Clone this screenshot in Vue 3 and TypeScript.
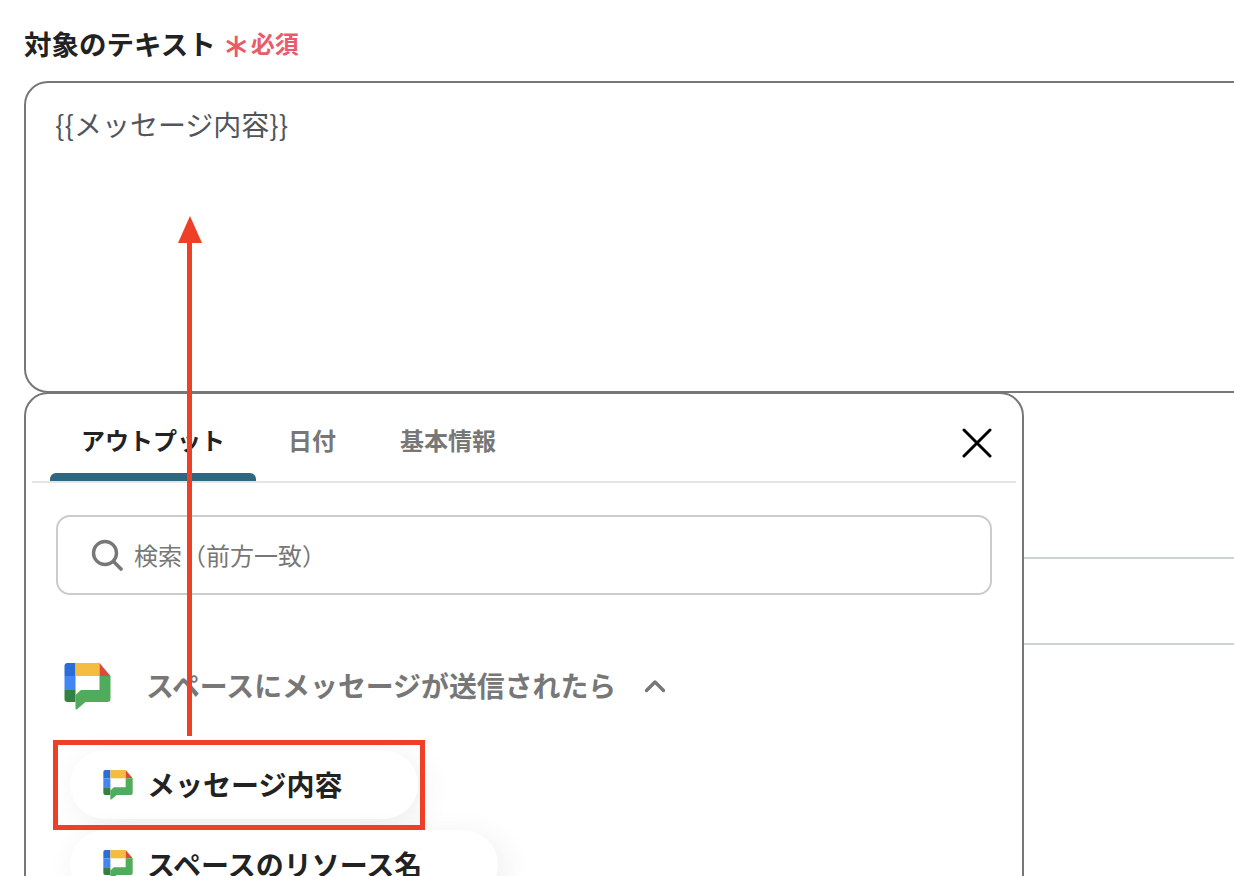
<script setup lang="ts">
const tabs = [
  { label: 'アウトプット', active: true },
  { label: '日付', active: false },
  { label: '基本情報', active: false },
]
const items = ['メッセージ内容', 'スペースのリソース名']
const fieldValue = '{' + '{メッセージ内容}' + '}'
</script>

<template>
  <div class="page">
    <svg class="defs" width="0" height="0" aria-hidden="true">
      <symbol id="chat" viewBox="0 0 46 47">
        <path d="M3 0H11V13H0V3A3 3 0 0 1 3 0Z" fill="#2a6dd9" />
        <rect x="0" y="13" width="11" height="14" fill="#4285f4" />
        <path d="M0 27H11V39H3A3 3 0 0 1 0 36Z" fill="#34813f" />
        <rect x="11" y="0" width="24" height="13" fill="#f4bc41" />
        <path d="M35 0L46 13H35Z" fill="#db4a3d" />
        <path d="M35 13H46V36A3 3 0 0 1 43 39H21L12.500 46.200C12 46.700 11 46.400 11 45.500V32L16.500 27H35Z" fill="#4eac5c" />
      </symbol>
    </svg>

    <div class="field-label">
      <span class="label-text">対象のテキスト</span>
      <span class="asterisk">∗</span>
      <span class="required">必須</span>
    </div>
    <div class="textarea">{{ fieldValue }}</div>
    <div class="behind-rows">
      <div class="behind-row"></div>
      <div class="behind-row"></div>
    </div>

    <div class="popup">
      <div class="tabs">
        <div v-for="tab in tabs" :key="tab.label" class="tab" :class="{ active: tab.active }">
          {{ tab.label }}
        </div>
        <svg class="close" viewBox="0 0 30 30" width="30" height="30">
          <path d="M2 2L28 28M28 2L2 28" stroke="#000" stroke-width="3" stroke-linecap="round" />
        </svg>
      </div>
      <div class="search">
        <svg class="search-icon" viewBox="0 0 32 32" width="32" height="32">
          <circle cx="14" cy="14" r="11.500" fill="none" stroke="#777" stroke-width="3.400" />
          <path d="M22.500 22.500L30 30" stroke="#777" stroke-width="3.600" stroke-linecap="round" />
        </svg>
        <span class="search-text">検索（前方一致）</span>
      </div>
      <div class="group-head">
        <svg class="group-icon"><use href="#chat" /></svg>
        <span class="group-title">スペースにメッセージが送信されたら</span>
        <svg class="chevron" viewBox="0 0 22 14" width="22" height="14">
          <path d="M2.500 11.500L11 3L19.500 11.500" fill="none" stroke="#777" stroke-width="3.400" stroke-linecap="round" stroke-linejoin="round" />
        </svg>
      </div>
      <div class="items">
        <div v-for="item in items" :key="item" class="pill">
          <svg class="pill-icon"><use href="#chat" /></svg>
          <span class="pill-text">{{ item }}</span>
        </div>
      </div>
    </div>

    <div class="arrow-line"></div>
    <div class="arrow-head"></div>
    <div class="highlight"></div>
  </div>
</template>

<style>
html,
body {
  margin: 0;
  overflow: hidden;
  background: #fff;
}
</style>

<style scoped>
.page {
  position: relative;
  width: 1234px;
  height: 876px;
  overflow: hidden;
  background: #fff;
  font-family: "Noto Sans CJK JP", "Noto Sans", sans-serif;
  color: #222;
}
.defs {
  position: absolute;
}
.field-label {
  display: flex;
  align-items: center;
  height: 40px;
  padding: 23px 0 0 24px;
  margin-bottom: 18px;
}
.label-text {
  font-size: 27.500px;
  font-weight: 700;
  line-height: 40px;
}
.asterisk {
  margin-left: 6px;
  width: 22px;
  color: #ea5a68;
  font-size: 34px;
  font-weight: 500;
  line-height: 40px;
  text-align: center;
}
.required {
  margin-left: 7px;
  color: #ea5a68;
  font-size: 24px;
  font-weight: 700;
  line-height: 40px;
}
.textarea {
  box-sizing: border-box;
  width: 1300px;
  height: 312px;
  margin-left: 24px;
  padding: 21px 29px;
  border: 2px solid #777;
  border-radius: 24px;
  color: #50565c;
  font-size: 28px;
  line-height: 40px;
}
.behind-rows {
  margin: 164px 0 0 24px;
}
.behind-row {
  box-sizing: border-box;
  height: 86px;
  border-top: 2px solid #ccd2d6;
}
.popup {
  position: absolute;
  left: 24px;
  top: 392px;
  box-sizing: border-box;
  width: 1000px;
  height: 600px;
  padding: 0 6px;
  border: 2px solid #777;
  border-radius: 24px;
  background: #fff;
}
.tabs {
  position: relative;
  display: flex;
  height: 87px;
  padding-left: 18px;
  border-bottom: 2px solid #e5e5e5;
}
.tab {
  box-sizing: border-box;
  height: 87px;
  padding: 26px 0 0;
  color: #777;
  font-size: 24px;
  font-weight: 700;
  line-height: 40px;
  text-align: center;
  margin-right: 64px;
}
.tab.active {
  position: relative;
  width: 206px;
  margin-right: 32px;
  color: #222;
}
.tab.active::after {
  content: "";
  position: absolute;
  left: 0;
  right: 0;
  bottom: 0;
  height: 8px;
  border-radius: 6px 6px 0 0;
  background: #2f6680;
}
.close {
  position: absolute;
  right: 24px;
  top: 34px;
}
.search {
  display: flex;
  align-items: center;
  box-sizing: border-box;
  width: 936px;
  height: 80px;
  margin: 32px 0 0 24px;
  padding-left: 33px;
  border: 2px solid #ccc;
  border-radius: 14px;
  color: #777;
  font-size: 24px;
}
.search-icon {
  margin-right: 11px;
}
.search-text {
  padding-bottom: 2px;
}
.group-head {
  display: flex;
  align-items: center;
  height: 48px;
  margin: 67px 0 0 32px;
}
.group-icon {
  width: 47px;
  height: 47px;
  flex: none;
}
.group-title {
  margin-left: 35px;
  padding-bottom: 3px;
  color: #777;
  font-size: 27.900px;
  font-weight: 700;
  line-height: 40px;
}
.chevron {
  margin-left: 28px;
}
.items {
  display: flex;
  flex-direction: column;
  align-items: flex-start;
  gap: 11px;
  margin: 40px 0 0 38px;
}
.pill {
  display: flex;
  align-items: center;
  box-sizing: border-box;
  height: 69px;
  padding: 0 76px 0 33px;
  border-radius: 35px;
  background: #fff;
  box-shadow: 6px 6px 32px rgba(0, 0, 0, 0.07);
  color: #222;
  font-weight: 700;
  white-space: nowrap;
}
.pill-text {
  padding-bottom: 2px;
  font-size: 28px;
}
.pill-icon {
  width: 30px;
  height: 30px;
  margin-right: 14px;
  flex: none;
}
.arrow-line {
  position: absolute;
  left: 187px;
  top: 240px;
  width: 5px;
  height: 496px;
  background: #ee4026;
}
.arrow-head {
  position: absolute;
  left: 178px;
  top: 216px;
  width: 0;
  height: 0;
  border-left: 12.500px solid transparent;
  border-right: 12.500px solid transparent;
  border-bottom: 27px solid #ee4026;
}
.highlight {
  position: absolute;
  left: 53px;
  top: 740px;
  box-sizing: border-box;
  width: 372px;
  height: 90px;
  border: 5px solid #ee4026;
}
</style>
